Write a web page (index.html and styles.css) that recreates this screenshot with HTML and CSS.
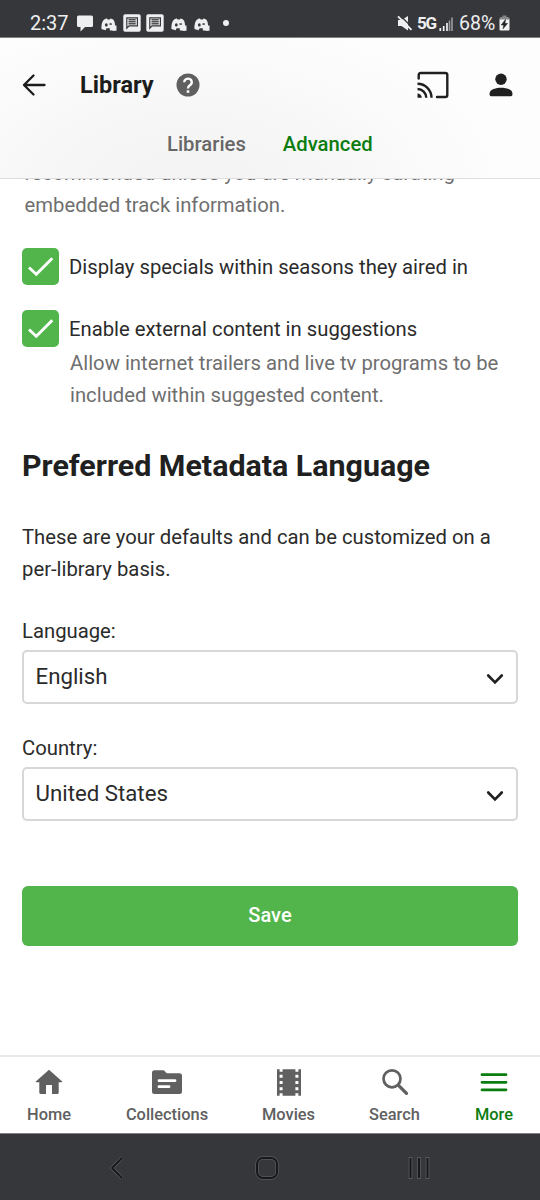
FILE: index.html
```html
<!DOCTYPE html>
<html lang="en">
<head>
<meta charset="utf-8">
<title>Library</title>
<link rel="stylesheet" href="styles.css">
</head>
<body>
<svg width="0" height="0" class="defs">
  <defs>
    <symbol id="controller" viewBox="0 0 16 13"><path d="M.4 10.800C.2 6.700 1.200 3 2.800 1.700 4 .9 5.300.5 6 .5l.6 1h2.300l.6-1c1.100 0 2.500.8 3.200 1.700.7.900 1.100 2.300 1.300 4.300v6H5L4 12C2.500 12 1.200 11.500.4 10.800z" fill="#eeeff0"/><path d="M4.500 12.500 5.500 10.300h3.300V13H4.500z" fill="#36373b"/><ellipse cx="5.300" cy="6.900" rx="1.400" ry="1.600" fill="#36373b"/><path d="M8.500 5.300h2.300v1.500H8.500z" fill="#36373b"/><path d="M9 7.500h6.500v5.200H12L10.500 11.500H9z" fill="#eeeff0"/></symbol>
    <symbol id="message" viewBox="0 0 18 18"><rect x=".3" y=".3" width="17.400" height="17.400" rx="1.800" fill="#eeeff0"/><path d="M3.800 14.200V3.800h10.600v8H6z" fill="#eeeff0" stroke="#36373b" stroke-width="1.200"/><path d="M5.500 5.800h7.200M5.500 7.800h7.200M5.500 9.800h7.200" stroke="#505155" stroke-width="1.400"/></symbol>
    <symbol id="check" viewBox="0 0 37 37"><path d="M7 19.500 14.300 26.200 30.300 10.200" fill="none" stroke="#fff" stroke-width="2.900"/></symbol>
    <symbol id="chevron" viewBox="0 0 18 12"><path d="m2.200 2.500 6.800 6.800 6.800-6.800" fill="none" stroke="#202020" stroke-width="2.600" stroke-linecap="round"/></symbol>
  </defs>
</svg>
<div class="screen">
  <div class="status">
    <span class="clock">2:37</span>
    <svg class="bubble" width="16" height="17" viewBox="0 0 16 17"><path d="M1.500.5h13Q16 .5 16 2v8.500q0 1.500-1.500 1.500H8L3.500 16.500V12h-2Q0 12 0 10.500V2Q0 .5 1.500.5z" fill="#eeeff0"/></svg>
    <svg class="pad" width="16" height="13"><use href="#controller"/></svg>
    <svg class="msg" width="18" height="18"><use href="#message"/></svg>
    <svg class="msg2" width="18" height="18"><use href="#message"/></svg>
    <svg class="pad2" width="16" height="13"><use href="#controller"/></svg>
    <svg class="pad3" width="16" height="13"><use href="#controller"/></svg>
    <i class="dot"></i>
    <div class="signals">
      <svg class="mute" width="16" height="16" viewBox="0 0 16 16"><path d="M1 5h3.500L11 1v14.500L4.500 11H1z" fill="#eeeff0"/><path d="m3 .2 12 12" stroke="#36373b" stroke-width="1.300"/><path d="m1 1.300 13.500 13.500" stroke="#eeeff0" stroke-width="1.900"/></svg>
      <span class="net">5G</span>
      <svg class="bars" width="14" height="14" viewBox="0 0 14 14"><path d="M1.300 14v-3M4.700 14V9M8 14V6" stroke="#eeeff0" stroke-width="1.700"/><path d="M10.500 14V3.500M13 14V.5" stroke="#9b9c9e" stroke-width="1.600"/></svg>
      <span class="percent">68%</span>
      <svg class="battery" width="11" height="16" viewBox="0 0 11 16"><path d="M3.500.5h4V2H9q1.500 0 1.500 1.500V5H.5V3.500Q.5 2 2 2h1.500z" fill="#858689"/><path d="M.5 4.500h10v10q0 1-1 1h-8q-1 0-1-1z" fill="#f2f2f2"/><path d="M6.500 4.500 2.300 10h2.600L4 13.700 8.500 8.500H5.900z" fill="#202124" stroke="#202124" stroke-width=".6"/></svg>
    </div>
  </div>
  <header class="header">
    <div class="bar">
      <svg class="back" width="26" height="24" viewBox="0 0 26 24"><path d="M12.500 2.500 3 12l9.500 9.500M3 12h20.500" fill="none" stroke="#1c1c1c" stroke-width="2.300" stroke-linecap="round" stroke-linejoin="round"/></svg>
      <h1 class="title">Library</h1>
      <svg class="help" width="24" height="24" viewBox="0 0 24 24"><circle cx="12" cy="12" r="11.500" fill="#606060"/><path d="M8.200 9.200a3.800 3.500 0 1 1 6.400 2.500C13 13 12 13.300 12 15.600" fill="none" stroke="#fff" stroke-width="2.400"/><path d="M10.700 17.300h2.600v2.500h-2.600z" fill="#fff"/></svg>
      <svg class="cast" width="32" height="28" viewBox="0 0 32 28" fill="none" stroke="#202020" stroke-width="2.400"><path d="M1.700 7.500V4q0-2 2-2h24.600q2 0 2 2v20q0 2-2 2h-8.300" stroke-linecap="round"/><path d="M.5 12.800A14 14 0 0 1 14.500 26.800M.5 18A8.800 8.800 0 0 1 9.300 26.800"/><path d="M.5 22.500a4.300 4.300 0 0 1 4.300 4.300H.5z" fill="#202020" stroke="none"/></svg>
      <svg class="user" width="24" height="24" viewBox="0 0 24 24" fill="#202020"><circle cx="12" cy="6.200" r="5.700"/><path d="M.6 20.500C.6 16 7.500 14.700 12 14.700s11.400 1.300 11.400 5.800v1.300q0 1.400-1.400 1.400H2q-1.400 0-1.400-1.400z"/></svg>
    </div>
    <nav class="tabs"><span class="tab">Libraries</span><span class="tab tab-on">Advanced</span></nav>
  </header>
  <main class="content">
    <p class="hint top-hint">recommended unless you are manually curating<br>embedded track information.</p>
    <div class="option"><span class="box"><svg width="37" height="37"><use href="#check"/></svg></span><span class="option-label">Display specials within seasons they aired in</span></div>
    <div class="option second"><span class="box"><svg width="37" height="37"><use href="#check"/></svg></span><span class="option-label">Enable external content in suggestions</span></div>
    <p class="hint option-hint">Allow internet trailers and live tv programs to be<br>included within suggested content.</p>
    <h2 class="heading">Preferred Metadata Language</h2>
    <p class="intro">These are your defaults and can be customized on a<br>per-library basis.</p>
    <div class="field"><span class="label">Language:</span><div class="select"><span>English</span><svg width="18" height="12"><use href="#chevron"/></svg></div></div>
    <div class="field"><span class="label">Country:</span><div class="select"><span>United States</span><svg width="18" height="12"><use href="#chevron"/></svg></div></div>
    <button class="save">Save</button>
  </main>
  <nav class="bottom">
    <span class="item home"><svg width="28" height="28" viewBox="0 0 28 28"><path d="M14 1.700.8 13.500q-.4.800.5.800h3V24.500q0 1.500 1.500 1.500H11v-9h6v9h5.200q1.500 0 1.500-1.500V14.300h3q.9 0 .5-.8z" fill="#606060"/></svg>Home</span>
    <span class="item collections"><svg width="32" height="28" viewBox="0 0 32 28"><path d="M3.500 2.300h9.300l3 3H28.500q2.500 0 2.500 2.500v15.700q0 2.500-2.500 2.500h-25Q1 26 1 23.500V4.800q0-2.500 2.500-2.500z" fill="#606060"/><path d="M8 12.700h16M8 18.700h10" stroke="#fff" stroke-width="2.800" stroke-linecap="round"/></svg>Collections</span>
    <span class="item movies"><svg width="26" height="28" viewBox="0 0 26 28"><path d="M1 1.200h2.600v2.600h3V1.200h12.800v2.600h3V1.200H25v26.600h-2.600v-2.500h-3v2.500H6.600v-2.500h-3v2.500H1z" fill="#606060"/><path d="M3.600 6.800h3v3h-3zM3.600 13h3v3h-3zM3.600 19.200h3v3h-3zM19.400 6.800h3v3h-3zM19.400 13h3v3h-3zM19.400 19.200h3v3h-3z" fill="#fff"/></svg>Movies</span>
    <span class="item search"><svg width="28" height="28" viewBox="0 0 28 28" fill="none" stroke="#606060"><circle cx="11" cy="10.800" r="8.500" stroke-width="2.700"/><path d="m17.500 17.300 8 8" stroke-width="3.300" stroke-linecap="round"/></svg>Search</span>
    <span class="item more"><svg width="28" height="28" viewBox="0 0 28 28"><path d="M2 6.700h24M2 14.300h24M2 21.800h24" stroke="#0b7d10" stroke-width="2.800" stroke-linecap="round"/></svg>More</span>
  </nav>
  <div class="system">
    <svg width="16" height="24" viewBox="0 0 16 24"><path d="M13 2 3 12l10 10" fill="none" stroke="#595a5e" stroke-width="3.600"/><path d="M13 2 3 12l10 10" fill="none" stroke="#17181a" stroke-width="2"/></svg>
    <svg class="home-key" width="24" height="24" viewBox="0 0 24 24" fill="none"><rect x="2" y="2" width="20" height="20" rx="6" stroke="#595a5e" stroke-width="3.400"/><rect x="2" y="2" width="20" height="20" rx="6" stroke="#17181a" stroke-width="2"/></svg>
    <svg width="24" height="24" viewBox="0 0 24 24"><path d="M3.500 1v22M12 1v22M20.500 1v22" stroke="#595a5e" stroke-width="3.600"/><path d="M3.500 2v20M12 2v20M20.500 2v20" stroke="#17181a" stroke-width="2"/></svg>
  </div>
</div>
</body>
</html>
```

FILE: styles.css
```css
* { box-sizing: border-box; }
body { margin: 0; font-family: Roboto, "Noto Sans", sans-serif; font-size: 20.280px; line-height: 32px; color: #2b2b2b; background: #fff; }
h1, h2, p { margin: 0; }
svg { display: block; flex: none; }
.defs { position: absolute; }
.screen { width: 540px; height: 1200px; display: flex; flex-direction: column; overflow: hidden; }

.status { height: 38px; flex: none; display: flex; align-items: center; padding: 8px 0 0 30px; background: #36373b; border-bottom: 1px solid #818184; color: #eeeff0; white-space: nowrap; }
.clock { width: 47px; padding-top: 1px; font-size: 20px; }
.bubble { margin-top: 2px; }
.pad { margin: 3px 0 0 8px; }
.msg { margin-left: 6px; }
.msg2 { margin-left: 5px; }
.pad2 { margin: 3px 0 0 7px; }
.pad3 { margin: 3px 0 0 7px; }
.dot { width: 6px; height: 6px; margin-left: 13px; border-radius: 50%; background: #eeeff0; }
.signals { display: flex; align-items: center; margin-left: auto; padding-right: 30px; }
.net { width: 21px; margin-left: 4px; font-size: 17px; font-weight: 700; letter-spacing: -1.300px; }
.bars { margin: 2px 0 0 1px; }
.percent { width: 39px; margin: 1px 1px 0 6px; padding-top: 1px; font-size: 19.500px; }
.mute { margin-left: -4px; }

.header { height: 141px; flex: none; border-bottom: 1px solid #dedede; background: radial-gradient(ellipse 310px 170px at 190px 150px, #f3f3f3 0%, #f7f7f7 50%, #fdfdfd 100%); }
.bar { height: 94px; display: flex; align-items: center; padding: 0 27px 0 21px; }
.title { width: 97px; margin-left: 33px; font-size: 23.500px; font-weight: 700; color: #1c1c1c; }
.help { margin-left: -1px; }
.cast { margin-left: auto; }
.user { margin-left: 40px; }
.tabs { display: flex; gap: 37px; margin-top: -1px; padding-left: 167px; font-weight: 500; line-height: 26px; color: #676767; }
.tab-on { color: #0b7d10; }

.content { height: 876px; flex: none; overflow: hidden; padding: 0 22px; display: flex; flex-direction: column; white-space: nowrap; }
.hint { color: #6f6f6f; }
.top-hint { margin: -22px 0 26px 2.500px; }
.option { display: flex; height: 38px; align-items: center; gap: 10px; }
.option-label { padding-top: 1px; }
.second { margin-top: 24px; }
.box { width: 37px; height: 37px; border-radius: 5px; background: #52b54b; }
.option-hint { margin: 0 0 0 48px; }
.heading { margin-top: 38px; font-size: 30.400px; line-height: 34px; font-weight: 700; color: #202020; }
.intro { margin: 38px 0 30px; }
.field { height: 117px; flex: none; }
.label { display: block; height: 35px; }
.select { height: 54px; display: flex; align-items: center; justify-content: space-between; padding: 0 12px 0 11.500px; border: 2px solid #d7d7d7; border-radius: 5px; font-size: 22.250px; }
.select span { padding-bottom: 2px; }
.select svg { margin-top: 4px; }
.save { height: 60px; flex: none; margin-top: 37px; padding: 0 0 2px; border: 0; border-radius: 6px; background: #52b54b; color: #fff; font: 500 20px/56px Roboto, sans-serif; }

.bottom { height: 78px; flex: none; display: flex; border-top: 2px solid #e9e9e9; padding: 11px 0 0 27px; font-size: 16.400px; font-weight: 500; color: #606060; }
.item { display: flex; flex-direction: column; align-items: center; line-height: 38px; }
.home { width: 44px; }
.collections { width: 82px; margin-left: 55px; }
.movies { width: 52px; margin-left: 54.500px; }
.search { width: 50px; margin-left: 55px; }
.more { width: 38px; margin-left: 55.500px; color: #0b7d10; }
.system { height: 67px; display: flex; justify-content: space-between; align-items: center; padding: 1px 109px 0; border-top: 1px solid #818184; background: #36373b; }
.home-key { margin-left: 2px; }
```
